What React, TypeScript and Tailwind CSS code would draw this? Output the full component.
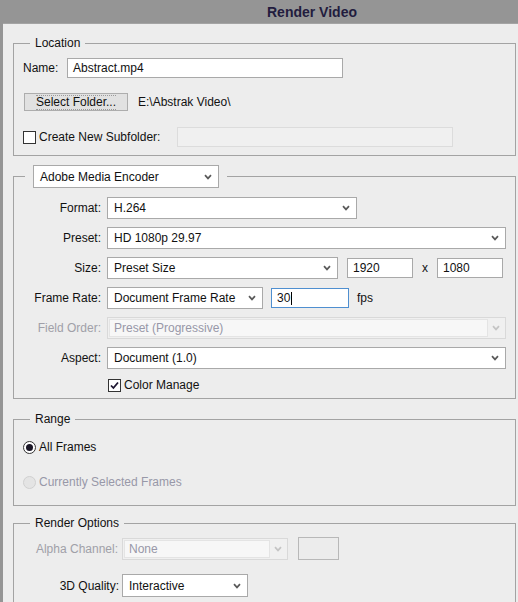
import React from "react";

function Chevron({ disabled = false }: { disabled?: boolean }) {
  return (
    <svg width="8" height="6" viewBox="0 0 8 6" className="shrink-0">
      <polyline
        points="1,1.2 4,4.4 7,1.2"
        fill="none"
        stroke={disabled ? "#c4c4c4" : "#5a5a5a"}
        strokeWidth="1.7"
      />
    </svg>
  );
}

function Select({ w, text, h = "h-[22px]" }: { w: string; text: string; h?: string }) {
  return (
    <div
      className={`${w} ${h} shrink-0 flex items-center justify-between bg-white border border-[#a9a9a9] pl-[6px] pr-[6px]`}
    >
      <span className="whitespace-nowrap">{text}</span>
      <Chevron />
    </div>
  );
}

function DisabledSelect({ w, inner, text }: { w: string; inner: string; text: string }) {
  return (
    <div className={`${w} h-[22px] shrink-0 flex items-center border border-[#d9d9d9] bg-[#f0f0f0] p-[1px]`}>
      <div className={`${inner} h-full flex items-center bg-[#f7f7f7] border border-[#e4e4e4] pl-[4px] text-[#9898a8]`}>
        {text}
      </div>
      <div className="flex-1 flex justify-center">
        <Chevron disabled />
      </div>
    </div>
  );
}

function TextInput({ w, text, focus = false, cursor = false }: { w: string; text: string; focus?: boolean; cursor?: boolean }) {
  return (
    <div
      className={`${w} h-[20px] shrink-0 flex items-center bg-white border ${focus ? "border-[#4f8fd0]" : "border-[#a9a9a9]"} pl-[5px]`}
    >
      <span className="whitespace-nowrap">{text}</span>
      {cursor && <span className="w-[1px] h-[13px] bg-black ml-[1px]" />}
    </div>
  );
}

function Checkbox({ checked = false }: { checked?: boolean }) {
  return (
    <div className="w-[13px] h-[13px] shrink-0 bg-white border border-[#333333] flex items-center justify-center">
      {checked && (
        <svg width="9" height="9" viewBox="0 0 9 9">
          <polyline points="1,4.5 3.4,7 8,1.5" fill="none" stroke="#1c1530" strokeWidth="1.8" />
        </svg>
      )}
    </div>
  );
}

function Radio({ checked = false, disabled = false }: { checked?: boolean; disabled?: boolean }) {
  return (
    <div
      className={`w-[13px] h-[13px] shrink-0 rounded-full border flex items-center justify-center ${
        disabled ? "border-[#d0d0d0] bg-[#e4e4e4]" : "border-[#333333] bg-white"
      }`}
    >
      {checked && <div className="w-[7px] h-[7px] rounded-full bg-[#1a1626]" />}
    </div>
  );
}

function Row({ label, children, disabled = false }: { label: string; children: React.ReactNode; disabled?: boolean }) {
  return (
    <div className="flex items-center h-[22px]">
      <div className={`w-[88px] text-right pr-[1px] whitespace-nowrap ${disabled ? "text-[#a0a0a8]" : ""}`}>{label}</div>
      <div className="ml-[5px] flex items-center">{children}</div>
    </div>
  );
}

export default function App() {
  return (
    <div className="w-[518px] h-[602px] overflow-hidden bg-[#959595] font-['Liberation_Sans',Arial,sans-serif] text-[12px] leading-[16px] text-[#111111]">
      <div className="h-[23px] flex items-center pl-[267px] font-bold text-[14px] text-[#221c3e]">Render Video</div>
      <div className="ml-[3px] h-[579px] bg-[#ededed] border-t border-[#a4a4a4] pl-[10px] pr-[2px] pt-[11px] flex flex-col">
        {/* Location */}
        <fieldset className="border border-[#a3a3a3] pb-[8px]">
          <legend className="ml-[16px] px-[5px] leading-[16px]">Location</legend>
          <div className="pl-[9px] pt-[7px] flex flex-col">
            <div className="flex items-center h-[19px]">
              <span className="w-[44px]">Name:</span>
              <TextInput w="w-[276px]" text="Abstract.mp4" />
            </div>
            <div className="flex items-center mt-[16px] h-[18px]">
              <div className="ml-[1px] w-[104px] h-[18px] bg-[#e1e1e1] border border-[#adadad] flex items-center justify-center">
                <span className="border-y border-dotted border-[#9a9a9a] leading-[13px]">Select Folder...</span>
              </div>
              <span className="ml-[10px]">E:\Abstrak Video\</span>
            </div>
            <div className="flex items-center mt-[16px] h-[20px]">
              <Checkbox />
              <span className="ml-[3px] w-[138px]">Create New Subfolder:</span>
              <div className="w-[276px] h-[20px] bg-[#f0f0f0] border border-[#dcdcdc]" />
            </div>
          </div>
        </fieldset>

        {/* Encoder */}
        <fieldset className="mt-[9px] border border-[#a3a3a3]">
          <legend className="ml-[11px] px-[8px]">
            <Select w="w-[186px]" h="h-[23px]" text="Adobe Media Encoder" />
          </legend>
          <div className="pt-[9px] flex flex-col gap-[8px]">
            <Row label="Format:">
              <Select w="w-[250px]" text="H.264" />
            </Row>
            <Row label="Preset:">
              <Select w="w-[399px]" text="HD 1080p 29.97" />
            </Row>
            <Row label="Size:">
              <Select w="w-[231px]" text="Preset Size" />
              <div className="ml-[9px]">
                <TextInput w="w-[66px]" text="1920" />
              </div>
              <span className="w-[24px] text-center">x</span>
              <TextInput w="w-[66px]" text="1080" />
            </Row>
            <Row label="Frame Rate:">
              <Select w="w-[156px]" text="Document Frame Rate" />
              <div className="ml-[8px]">
                <TextInput w="w-[78px]" text="30" focus cursor />
              </div>
              <span className="ml-[8px]">fps</span>
            </Row>
            <Row label="Field Order:" disabled>
              <DisabledSelect w="w-[399px]" inner="w-[379px]" text="Preset (Progressive)" />
            </Row>
            <Row label="Aspect:">
              <Select w="w-[399px]" text="Document (1.0)" />
            </Row>
          </div>
          <div className="flex items-center h-[16px] mt-[8px] mb-[5px] pl-[94px]">
            <Checkbox checked />
            <span className="ml-[3px]">Color Manage</span>
          </div>
        </fieldset>

        {/* Range */}
        <fieldset className="mt-[12px] border border-[#a3a3a3] pb-[15px]">
          <legend className="ml-[16px] px-[5px]">Range</legend>
          <div className="pl-[9px] pt-[12px] flex flex-col">
            <div className="flex items-center h-[16px]">
              <Radio checked />
              <span className="ml-[3px]">All Frames</span>
            </div>
            <div className="flex items-center h-[16px] mt-[19px]">
              <Radio disabled />
              <span className="ml-[3px] text-[#9898a8]">Currently Selected Frames</span>
            </div>
          </div>
        </fieldset>

        {/* Render Options */}
        <fieldset className="mt-[9px] border border-[#a3a3a3] pb-[20px]">
          <legend className="ml-[16px] px-[5px]">Render Options</legend>
          <div className="pt-[6px] flex flex-col">
            <div className="flex items-center h-[23px]">
              <div className="w-[104px] text-right text-[#a0a0a8] whitespace-nowrap">Alpha Channel:</div>
              <div className="ml-[4px]">
                <DisabledSelect w="w-[166px]" inner="w-[146px]" text="None" />
              </div>
              <div className="ml-[10px] w-[41px] h-[23px] border border-[#b8b8b8] bg-[#ececec]" />
            </div>
            <div className="flex items-center h-[23px] mt-[14px]">
              <div className="w-[105px] text-right whitespace-nowrap">3D Quality:</div>
              <div className="ml-[3px]">
                <Select w="w-[126px]" h="h-[23px]" text="Interactive" />
              </div>
            </div>
          </div>
        </fieldset>
      </div>
    </div>
  );
}
